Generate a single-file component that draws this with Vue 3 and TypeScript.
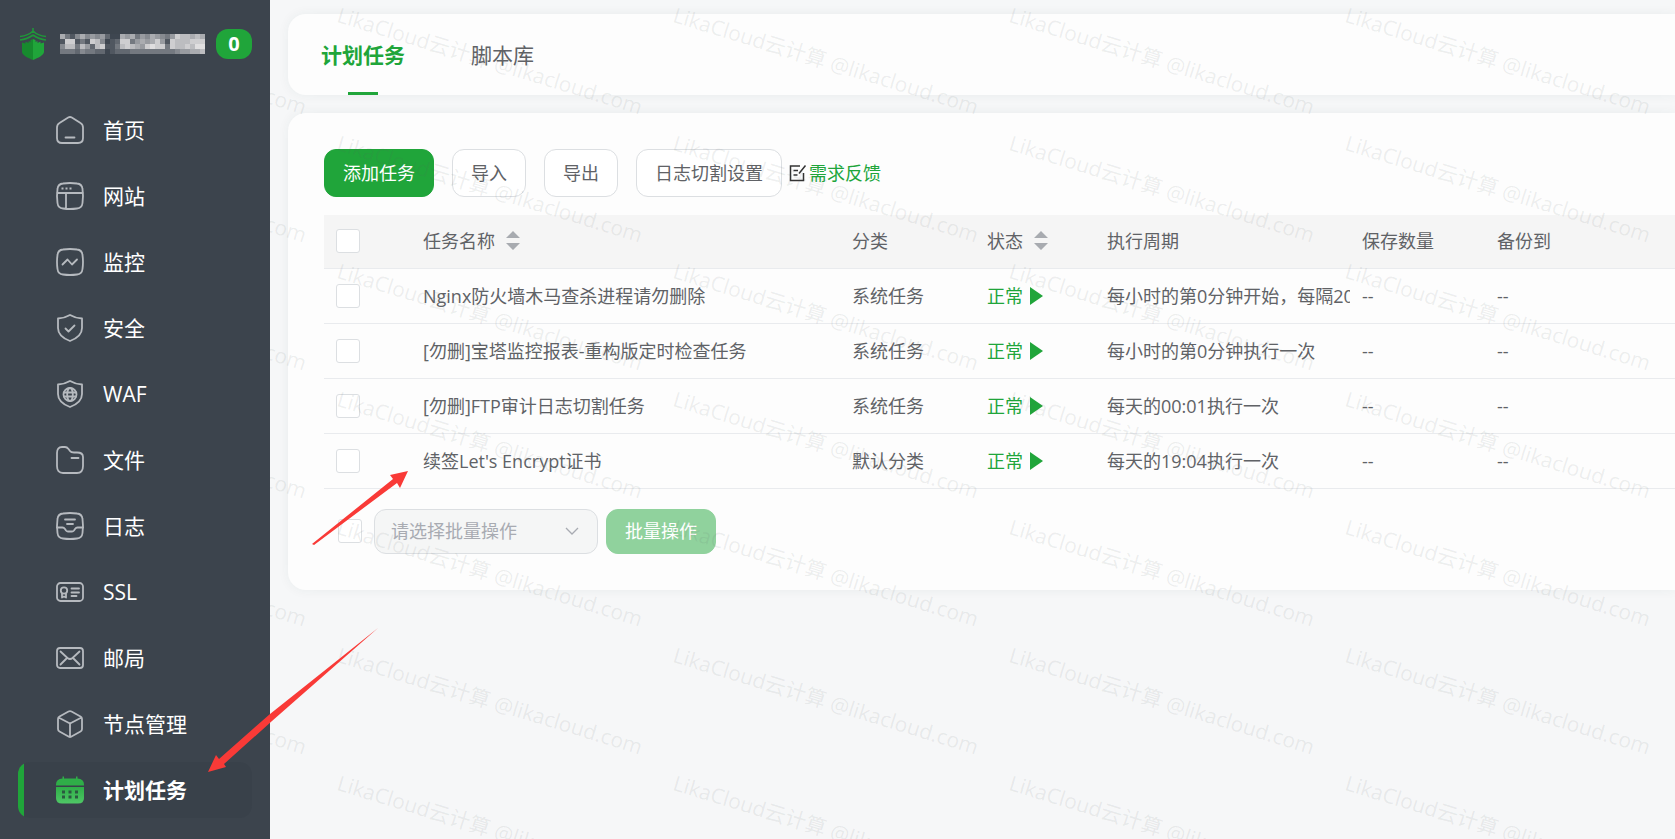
<script setup lang="ts">
import { ref } from 'vue'

interface NavItem { key: string; label: string }
interface Task { name: string; type: string; cycle: string }

const navItems: NavItem[] = [
  { key: 'home', label: '首页' },
  { key: 'site', label: '网站' },
  { key: 'monitor', label: '监控' },
  { key: 'safe', label: '安全' },
  { key: 'waf', label: 'WAF' },
  { key: 'files', label: '文件' },
  { key: 'logs', label: '日志' },
  { key: 'ssl', label: 'SSL' },
  { key: 'mail', label: '邮局' },
  { key: 'node', label: '节点管理' },
  { key: 'cron', label: '计划任务' },
]
const active = ref('cron')

const tasks: Task[] = [
  { name: 'Nginx防火墙木马查杀进程请勿删除', type: '系统任务', cycle: '每小时的第0分钟开始，每隔20' },
  { name: '[勿删]宝塔监控报表-重构版定时检查任务', type: '系统任务', cycle: '每小时的第0分钟执行一次' },
  { name: '[勿删]FTP审计日志切割任务', type: '系统任务', cycle: '每天的00:01执行一次' },
  { name: "续签Let's Encrypt证书", type: '默认分类', cycle: '每天的19:04执行一次' },
]

/* Brightness (0-9) of each block of the censored server name. */
const mosaic: string[] = [
  '63146454520065635465435877676',
  '18813187401288356568518777888',
  '47737527811378765898838778799',
  '33324332201222333333333455667',
]
const shade = (v: string): string => {
  const n = Number(v)
  return `rgb(${62 + n * 18}, ${70 + n * 17}, ${80 + n * 16})`
}
</script>

<template>
  <div class="app">
    <aside class="sidebar">
      <header class="brand">
        <svg class="logo" viewBox="0 0 28 32" aria-hidden="true">
          <path d="M14 0v5M14 3C11 6 6 8 1 8.500M14 3c3 3 8 5 13 5.500M14 7C10 10 6 11.500 1 12M14 7c4 3 8 4.500 13 5" fill="none" stroke="#20963a" stroke-width="1.600" />
          <path d="M14 11 11.500 12v2L9.500 13v2L6.500 13.500v2L3 14.500V24c0 3 6 6 11 8z" fill="#178a2e" />
          <path d="M14 11l2.500 1v2l2-1v2l3-1.500v2l3.500-1V24c0 3-6 6-11 8z" fill="#20a53a" />
        </svg>
        <svg class="mosaic" viewBox="0 0 145 20" shape-rendering="crispEdges" aria-hidden="true">
          <template v-for="(row, y) in mosaic" :key="y">
            <rect v-for="(v, x) in row.split('')" :key="x" :x="x * 5" :y="y * 5" width="5" height="5" :fill="shade(v)" />
          </template>
        </svg>
        <span class="badge">0</span>
      </header>
      <nav class="nav">
        <a v-for="item in navItems" :key="item.key" href="#" class="nav-item" :class="{ active: item.key === active }" @click.prevent="active = item.key">
          <svg class="nav-icon" viewBox="0 0 28 28" aria-hidden="true">
            <g v-if="item.key === 'home'">
              <path d="M12.200 1.500Q14 .5 15.800 1.500L24.500 7Q27 8.500 27 11.500V22Q27 27 22 27H6Q1 27 1 22V11.500Q1 8.500 3.500 7z" />
              <path d="M9.500 21.500h9" />
            </g>
            <g v-else-if="item.key === 'site'">
              <path d="M7 1.500Q14 .5 21 1.500Q26 2 26.500 7Q27.500 14 26.500 21Q26 26 21 26.500Q14 27.500 7 26.500Q2 26 1.500 21Q.5 14 1.500 7Q2 2 7 1.500zM1 11h26M10 11v15.500" />
              <path d="M5.500 6.500h2M9.500 6.500h2M13.500 6.500h2" stroke-linecap="butt" stroke-width="2" />
            </g>
            <g v-else-if="item.key === 'monitor'">
              <path d="M7 1.500Q14 .5 21 1.500Q26 2 26.500 7Q27.500 14 26.500 21Q26 26 21 26.500Q14 27.500 7 26.500Q2 26 1.500 21Q.5 14 1.500 7Q2 2 7 1.500z" />
              <path d="M6.500 16.500 11.500 11.500 16 16.500 21 11.500" />
            </g>
            <g v-else-if="item.key === 'safe'">
              <path d="M14 1Q19 4 26 4.500V14Q26 22.500 14 27Q2 22.500 2 14V4.500Q9 4 14 1z" />
              <path d="M9.500 14.500 12.500 17.500 18.500 11.500" />
            </g>
            <g v-else-if="item.key === 'waf'">
              <path d="M14 1Q19 4 26 4.500V14Q26 22.500 14 27Q2 22.500 2 14V4.500Q9 4 14 1z" />
              <circle cx="14" cy="14.500" r="6.500" />
              <ellipse cx="14" cy="14.500" rx="2.800" ry="6.500" />
              <path d="M8 12.500h12M8 16.500h12" />
            </g>
            <g v-else-if="item.key === 'files'">
              <path d="M1 7Q1 1 6 1H9Q11 1 12.500 3L14 5Q15 6.500 18 6.500H21Q27 6.500 27 11V20Q27 27 21 27H7Q1 27 1 20z" />
              <path d="M15.500 12h7" />
            </g>
            <g v-else-if="item.key === 'logs'">
              <path d="M7 1.500Q14 .5 21 1.500Q26 2 26.500 7Q27.500 14 26.500 21Q26 26 21 26.500Q14 27.500 7 26.500Q2 26 1.500 21Q.5 14 1.500 7Q2 2 7 1.500z" />
              <path d="M1 15.500H6.500Q8 15.500 9 17L10 18.500Q10.800 19.500 12 19.500H16Q17.200 19.500 18 18.500L19 17Q20 15.500 21.500 15.500H27M9 7.500h10M11 12h6" />
            </g>
            <g v-else-if="item.key === 'ssl'">
              <rect x="1" y="5" width="26" height="18" rx="3.500" />
              <circle cx="8" cy="12.500" r="3.200" />
              <path d="M6 16v3.500L8 18.500 10 19.500V16M15.500 10.500h7.500M15.500 14.500h7.500M15.500 18h5" />
            </g>
            <g v-else-if="item.key === 'mail'">
              <rect x="1" y="4" width="26" height="20" rx="3" />
              <path d="M4.500 7.500 11.500 14Q14 16 16.500 14L23.500 7.500M4.500 20.500 10.500 14.500M23.500 20.500 17.500 14.500" />
            </g>
            <g v-else-if="item.key === 'node'">
              <path d="M12.500 1.500Q14 .7 15.500 1.500L24.500 6.500Q26 7.300 26 9V19Q26 20.700 24.500 21.500L15.500 26.500Q14 27.300 12.500 26.500L3.500 21.500Q2 20.700 2 19V9Q2 7.300 3.500 6.500zM2.500 7.500 14 13.500 25.500 7.500M14 13.500V27" />
            </g>
            <g v-else class="solid">
              <defs>
                <linearGradient id="cal" x1="0" y1="0" x2="0" y2="1">
                  <stop offset="0" stop-color="#2fae48" />
                  <stop offset="1" stop-color="#4fc766" />
                </linearGradient>
              </defs>
              <path d="M6.500 .5h1.500V2.500H20V.5h1.500V2.500Q28 3 28 8.500V9.500H0V8.500Q0 3 6.500 2.500z" fill="#2fae48" />
              <path d="M0 11h28V22Q28 27.500 22 27.500H6Q0 27.500 0 22z" fill="url(#cal)" />
              <path d="M6 14.500h3v3H6zM12.500 14.500h3v3h-3zM19 14.500h3v3h-3zM6 19.500h3v3H6zM12.500 19.500h3v3h-3zM19 19.500h3v3h-3z" fill="#2b5a40" />
            </g>
          </svg>
          <span>{{ item.label }}</span>
        </a>
      </nav>
    </aside>

    <main class="main">
      <nav class="card tabs">
        <button type="button" class="tab current">计划任务</button>
        <button type="button" class="tab">脚本库</button>
      </nav>

      <section class="card content">
        <div class="toolbar">
          <button type="button" class="btn primary">添加任务</button>
          <button type="button" class="btn">导入</button>
          <button type="button" class="btn">导出</button>
          <button type="button" class="btn">日志切割设置</button>
          <a href="#" class="feedback">
            <svg viewBox="0 0 18 18" aria-hidden="true"><path d="M11 2H1.500V16.500H14.500V9M4.500 6.500H9M4.500 11H8.500M16.500 1.500 10 9.500" /></svg>
            <span>需求反馈</span>
          </a>
        </div>

        <table class="tasks">
          <colgroup>
            <col class="c-check"><col class="c-name"><col class="c-type"><col class="c-state"><col class="c-cycle"><col class="c-keep"><col>
          </colgroup>
          <thead>
            <tr>
              <th><input type="checkbox" class="check" aria-label="全选"></th>
              <th><span class="sortable">任务名称<svg class="sort" viewBox="0 0 14 20" aria-hidden="true"><path d="M7 0 14 7H0zM0 12h14L7 19z" /></svg></span></th>
              <th>分类</th>
              <th><span class="sortable">状态<svg class="sort" viewBox="0 0 14 20" aria-hidden="true"><path d="M7 0 14 7H0zM0 12h14L7 19z" /></svg></span></th>
              <th>执行周期</th>
              <th>保存数量</th>
              <th>备份到</th>
            </tr>
          </thead>
          <tbody>
            <tr v-for="task in tasks" :key="task.name">
              <td><input type="checkbox" class="check" :aria-label="task.name"></td>
              <td>{{ task.name }}</td>
              <td>{{ task.type }}</td>
              <td><a href="#" class="state">正常<svg viewBox="0 0 13 18" aria-hidden="true"><path d="M0 0 13 9 0 18z" /></svg></a></td>
              <td>{{ task.cycle }}</td>
              <td>--</td>
              <td>--</td>
            </tr>
          </tbody>
        </table>

        <div class="bulk">
          <input type="checkbox" class="check" aria-label="全选任务">
          <div class="picker">
            <select disabled aria-label="批量操作"><option>请选择批量操作</option></select>
            <svg viewBox="0 0 14 8" aria-hidden="true"><path d="M1 1l6 6 6-6" /></svg>
          </div>
          <button type="button" class="btn primary small" disabled>批量操作</button>
        </div>
      </section>
    </main>

    <div class="watermark" aria-hidden="true">
      <div v-for="n in 35" :key="n" class="mark"><span>LikaCloud云计算 @likacloud.com</span></div>
    </div>

    <svg class="arrows" width="420" height="800" aria-hidden="true">
      <path d="M408 471 390 475 393 479 312 544 314 545 397 483 400 488z" />
      <path d="M208 772 216 755 219 759 270 714 378 628 272 721 224 764 226 767z" />
    </svg>
  </div>
</template>

<style>
body {
  margin: 0;
}
</style>

<style scoped>
.app {
  position: relative;
  display: flex;
  min-height: 100vh;
  overflow: hidden;
  background: #f6f7f8;
  color: #606266;
  font-family: "Open Sans", "Noto Sans CJK SC", sans-serif;
  font-size: 18px;
  line-height: 24px;
}
.app * {
  box-sizing: border-box;
}
a {
  color: inherit;
  text-decoration: none;
}
button,
select {
  font: inherit;
}
.sidebar {
  position: relative;
  z-index: 2;
  flex: 0 0 270px;
  padding: 0 18px;
  background: #3c444d;
  color: #fff;
}
.brand {
  display: flex;
  align-items: center;
  height: 88px;
}
.logo {
  width: 28px;
  height: 32px;
  margin: 0 13px 0 1px;
}
.mosaic {
  width: 145px;
  height: 20px;
}
.badge {
  width: 36px;
  margin-left: auto;
  border-radius: 12px;
  background: #20a53a;
  font-size: 20px;
  font-weight: 700;
  line-height: 30px;
  text-align: center;
}
.nav {
  display: flex;
  flex-direction: column;
  gap: 10px;
  padding: 14px 0 20px;
}
.nav-item {
  display: flex;
  align-items: center;
  gap: 19px;
  height: 56px;
  padding-left: 38px;
  border-radius: 12px;
  font-size: 21px;
}
.nav-item.active {
  background: linear-gradient(90deg, #20a53a 6px, #39414a 6px);
  font-weight: 700;
}
.nav-icon {
  width: 28px;
  height: 28px;
  overflow: visible;
  fill: none;
  stroke: #b6babf;
  stroke-width: 1.8;
  stroke-linecap: round;
  stroke-linejoin: round;
}
.nav-icon .solid {
  stroke: none;
}
.main {
  flex: 1;
  min-width: 0;
  padding: 14px 0 0 18px;
}
.card {
  background: #fdfdfd;
  box-shadow: 0 0 12px rgba(40, 70, 60, 0.06);
}
.tabs {
  display: flex;
  gap: 66px;
  height: 81px;
  margin-bottom: 18px;
  padding-left: 33px;
  border-radius: 18px 0 0 18px;
}
.tab {
  position: relative;
  padding: 0;
  border: 0;
  background: none;
  color: #606266;
  font-size: 21px;
}
.tab.current {
  color: #20a53a;
  font-weight: 700;
}
.tab.current::after {
  content: "";
  position: absolute;
  bottom: 0;
  left: 50%;
  width: 30px;
  height: 3px;
  margin-left: -15px;
  background: #20a53a;
}
.content {
  padding: 36px 0 36px 36px;
  border-radius: 18px 0 0 18px;
}
.toolbar {
  display: flex;
  align-items: center;
  gap: 18px;
  margin-bottom: 18px;
}
.btn {
  height: 48px;
  padding: 0 18px;
  border: 1px solid #dcdfe2;
  border-radius: 12px;
  background: #fff;
  color: #606266;
}
.btn.primary {
  border-color: #20a53a;
  background: #20a53a;
  color: #fff;
}
.btn.small {
  height: 45px;
}
.btn:disabled {
  border-color: #90d29d;
  background: #90d29d;
}
.feedback {
  display: flex;
  align-items: center;
  gap: 2px;
  margin-left: -11px;
  color: #20a53a;
}
.feedback svg {
  width: 18px;
  height: 18px;
  fill: none;
  stroke: #333;
  stroke-width: 1.5;
}
.tasks {
  width: 100%;
  table-layout: fixed;
  border-collapse: collapse;
}
.c-check { width: 87px; }
.c-name { width: 429px; }
.c-type { width: 135px; }
.c-state { width: 120px; }
.c-cycle { width: 255px; }
.c-keep { width: 135px; }
.tasks th,
.tasks td {
  height: 55px;
  padding: 0 4px 0 12px;
  border-bottom: 1px solid #e9ebee;
  overflow: hidden;
  font-weight: 400;
  text-align: left;
  white-space: nowrap;
}
.tasks th {
  height: 53px;
  background: #f5f5f5;
}
.check {
  display: block;
  appearance: none;
  width: 24px;
  height: 24px;
  margin: 0;
  border: 1px solid #dcdfe2;
  border-radius: 3px;
  background: #fff;
}
.sortable,
.state {
  display: flex;
  align-items: center;
  gap: 11px;
}
.sort {
  width: 14px;
  height: 20px;
  fill: #a8abb0;
}
.state {
  gap: 7px;
  color: #20a53a;
}
.state svg {
  width: 13px;
  height: 18px;
  fill: #20a53a;
}
.bulk {
  display: flex;
  align-items: center;
  gap: 8px;
  margin-top: 20px;
  padding-left: 14px;
}
.picker {
  position: relative;
  width: 224px;
  margin-left: 4px;
}
.picker select {
  display: block;
  appearance: none;
  width: 100%;
  height: 45px;
  padding: 0 16px;
  border: 1px solid #dcdfe2;
  border-radius: 12px;
  background: #f5f6f6;
  color: #a8abb2;
  opacity: 1;
}
.picker svg {
  position: absolute;
  top: 18px;
  right: 19px;
  width: 14px;
  height: 8px;
  fill: none;
  stroke: #a8abb2;
  stroke-width: 1.3;
}
.watermark {
  position: absolute;
  inset: 0;
  z-index: 1;
  display: grid;
  grid-template-columns: repeat(5, 336px);
  grid-auto-rows: 128px;
  overflow: hidden;
  pointer-events: none;
  color: rgba(90, 100, 100, 0.1);
  font-size: 21px;
}
.mark {
  padding: 2px 0 0 2px;
  white-space: nowrap;
}
.mark span {
  display: inline-block;
  transform: rotate(17deg);
  transform-origin: 0 50%;
}
.arrows {
  position: absolute;
  top: 0;
  left: 0;
  z-index: 3;
  pointer-events: none;
  fill: #f93a37;
}
</style>
